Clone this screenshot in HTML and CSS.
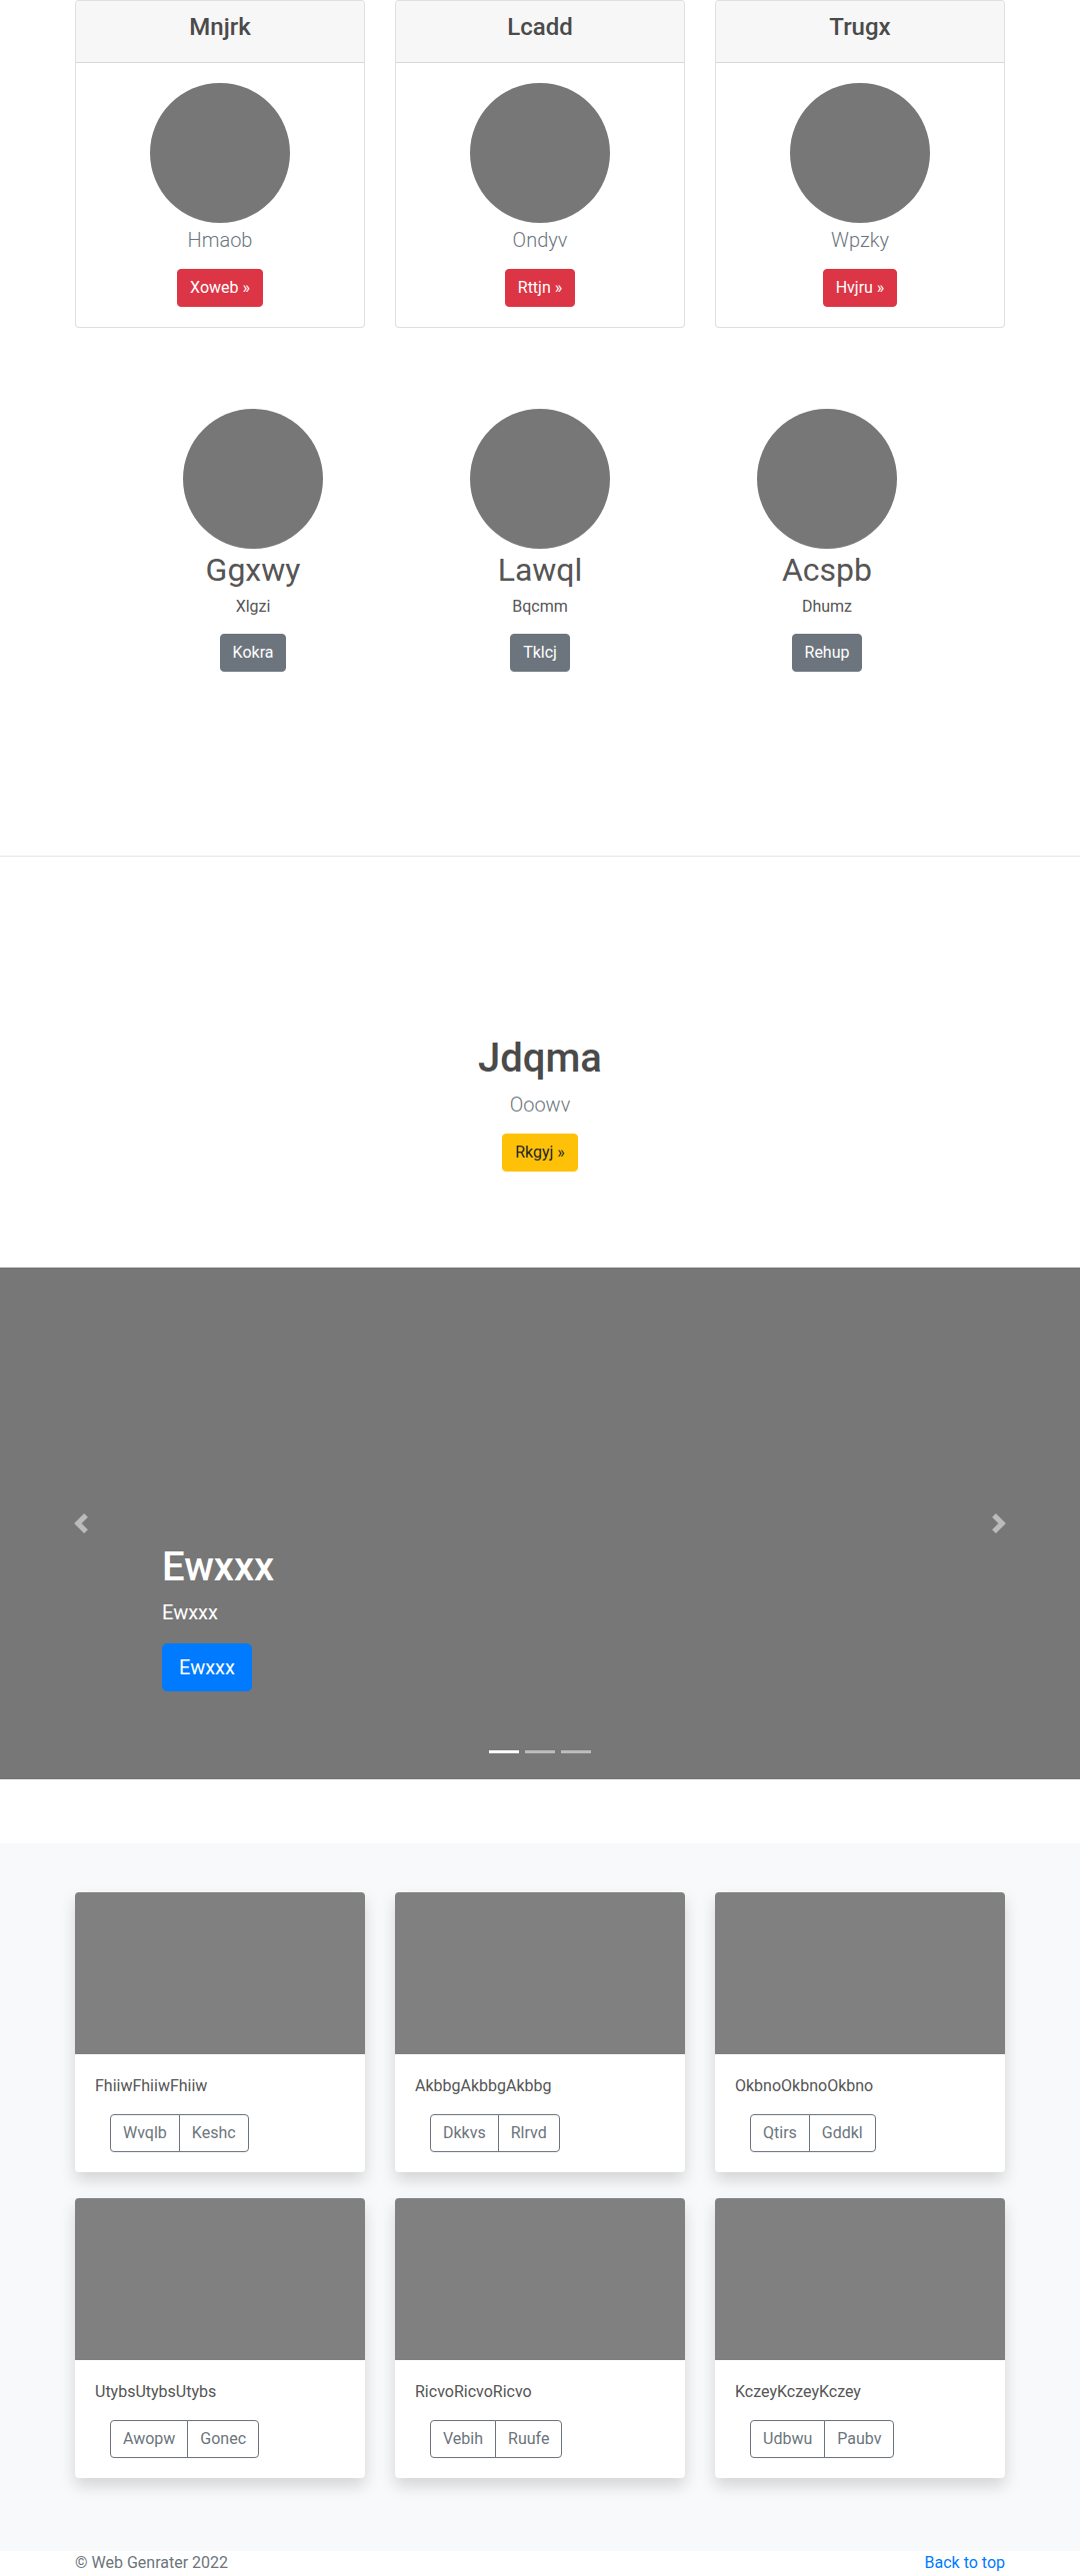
FILE: index.html
```html
<!DOCTYPE html>
<html lang="en">
<head>
<meta charset="utf-8">
<title>Web Genrater</title>
<link rel="stylesheet" href="styles.css">
</head>
<body>
<section class="pricing">
  <div class="container">
    <div class="row3">
      <div class="pcard">
        <div class="pcard-header"><h4 class="pcard-title">Mnjrk</h4></div>
        <div class="pcard-body">
          <div class="avatar"></div>
          <p class="lead">Hmaob</p>
          <a class="btn btn-danger" href="#">Xoweb »</a>
        </div>
      </div>
      <div class="pcard">
        <div class="pcard-header"><h4 class="pcard-title">Lcadd</h4></div>
        <div class="pcard-body">
          <div class="avatar"></div>
          <p class="lead">Ondyv</p>
          <a class="btn btn-danger" href="#">Rttjn »</a>
        </div>
      </div>
      <div class="pcard">
        <div class="pcard-header"><h4 class="pcard-title">Trugx</h4></div>
        <div class="pcard-body">
          <div class="avatar"></div>
          <p class="lead">Wpzky</p>
          <a class="btn btn-danger" href="#">Hvjru »</a>
        </div>
      </div>
    </div>
  </div>
</section>

<section class="marketing">
  <div class="mk-col">
    <div class="avatar"></div>
    <h2 class="mk-title">Ggxwy</h2>
    <p class="mk-text">Xlgzi</p>
    <a class="btn btn-secondary" href="#">Kokra</a>
  </div>
  <div class="mk-col">
    <div class="avatar"></div>
    <h2 class="mk-title">Lawql</h2>
    <p class="mk-text">Bqcmm</p>
    <a class="btn btn-secondary" href="#">Tklcj</a>
  </div>
  <div class="mk-col">
    <div class="avatar"></div>
    <h2 class="mk-title">Acspb</h2>
    <p class="mk-text">Dhumz</p>
    <a class="btn btn-secondary" href="#">Rehup</a>
  </div>
</section>

<hr class="divider">

<section class="hero">
  <h1 class="hero-title">Jdqma</h1>
  <p class="lead">Ooowv</p>
  <a class="btn btn-warning" href="#">Rkgyj »</a>
</section>

<section class="carousel">
  <a class="carousel-control prev" href="#">
    <svg width="20" height="20" viewBox="0 0 8 8"><path fill="#fff" d="M5.25 0l-4 4 4 4 1.5-1.5L4.25 4l2.5-2.5L5.25 0z"/></svg>
  </a>
  <div class="carousel-caption">
    <h1 class="caption-title">Ewxxx</h1>
    <p class="caption-text">Ewxxx</p>
    <p class="caption-action"><a class="btn btn-primary btn-lg" href="#">Ewxxx</a></p>
  </div>
  <a class="carousel-control next" href="#">
    <svg width="20" height="20" viewBox="0 0 8 8"><path fill="#fff" d="M2.75 0l-1.5 1.5L3.75 4l-2.5 2.5L2.75 8l4-4-4-4z"/></svg>
  </a>
  <div class="indicators">
    <span class="dot active"></span>
    <span class="dot"></span>
    <span class="dot"></span>
  </div>
</section>

<section class="album">
  <div class="container">
    <div class="row3 album-grid">
      <div class="acard">
        <div class="acard-img"></div>
        <div class="acard-body">
          <p class="acard-text">FhiiwFhiiwFhiiw</p>
          <div class="btn-group"><a class="btn btn-outline" href="#">Wvqlb</a><a class="btn btn-outline" href="#">Keshc</a></div>
        </div>
      </div>
      <div class="acard">
        <div class="acard-img"></div>
        <div class="acard-body">
          <p class="acard-text">AkbbgAkbbgAkbbg</p>
          <div class="btn-group"><a class="btn btn-outline" href="#">Dkkvs</a><a class="btn btn-outline" href="#">Rlrvd</a></div>
        </div>
      </div>
      <div class="acard">
        <div class="acard-img"></div>
        <div class="acard-body">
          <p class="acard-text">OkbnoOkbnoOkbno</p>
          <div class="btn-group"><a class="btn btn-outline" href="#">Qtirs</a><a class="btn btn-outline" href="#">Gddkl</a></div>
        </div>
      </div>
      <div class="acard">
        <div class="acard-img"></div>
        <div class="acard-body">
          <p class="acard-text">UtybsUtybsUtybs</p>
          <div class="btn-group"><a class="btn btn-outline" href="#">Awopw</a><a class="btn btn-outline" href="#">Gonec</a></div>
        </div>
      </div>
      <div class="acard">
        <div class="acard-img"></div>
        <div class="acard-body">
          <p class="acard-text">RicvoRicvoRicvo</p>
          <div class="btn-group"><a class="btn btn-outline" href="#">Vebih</a><a class="btn btn-outline" href="#">Ruufe</a></div>
        </div>
      </div>
      <div class="acard">
        <div class="acard-img"></div>
        <div class="acard-body">
          <p class="acard-text">KczeyKczeyKczey</p>
          <div class="btn-group"><a class="btn btn-outline" href="#">Udbwu</a><a class="btn btn-outline" href="#">Paubv</a></div>
        </div>
      </div>
    </div>
  </div>
</section>

<footer class="footer">
  <div class="container footer-inner">
    <p class="footer-copy">© Web Genrater 2022</p>
    <p class="footer-top"><a href="#">Back to top</a></p>
  </div>
</footer>
</body>
</html>
```

FILE: styles.css
```css
* { box-sizing: border-box; }

html, body { margin: 0; padding: 0; }

body {
  font-family: "Segoe UI", Roboto, "Liberation Sans", Arial, sans-serif;
  font-size: 16px;
  line-height: 1.5;
  color: #555;
  background: #fff;
}

.container {
  width: 960px;
  margin: 0 auto;
  padding: 0 15px;
}

.row3 {
  display: grid;
  grid-template-columns: repeat(3, 290px);
  column-gap: 30px;
}

/* buttons */
.btn {
  display: inline-block;
  padding: 6px 12px;
  font-size: 16px;
  line-height: 1.5;
  border: 1px solid transparent;
  border-radius: 4px;
  text-decoration: none;
  font-weight: 400;
  vertical-align: middle;
}
.btn-danger { background: #dc3545; border-color: #dc3545; color: #fff; }
.btn-secondary { background: #6c757d; border-color: #6c757d; color: #fff; }
.btn-warning { background: #ffc107; border-color: #ffc107; color: #212529; }
.btn-primary { background: #007bff; border-color: #007bff; color: #fff; }
.btn-lg { padding: 8px 16px; font-size: 20px; border-radius: 5px; }
.btn-outline { background: transparent; border-color: #6c757d; color: #6c757d; }

.avatar {
  width: 140px;
  height: 140px;
  border-radius: 50%;
  background: #777;
  margin: 0 auto;
}

.lead {
  font-size: 20px;
  font-weight: 300;
  line-height: 1.5;
  color: #6c757d;
}

/* pricing cards */
.pricing { margin-bottom: 81px; }

.pcard {
  border: 1px solid rgba(0,0,0,.125);
  border-radius: 4px;
  text-align: center;
  background: #fff;
}
.pcard-header {
  background: #f7f7f7;
  border-bottom: 1px solid rgba(0,0,0,.125);
  padding: 12px 20px;
  border-radius: 3px 3px 0 0;
}
.pcard-title {
  margin: 0 0 8px;
  font-size: 24px;
  line-height: 1.2;
  font-weight: 500;
  color: #4a4a4a;
}
.pcard-body { padding: 20px; }
.pcard-body .avatar { margin-bottom: 2px; }
.pcard-body .lead { margin: 0 0 14px; }

/* marketing */
.marketing {
  display: grid;
  grid-template-columns: repeat(3, 287px);
  justify-content: center;
  margin-bottom: 184px;
}
.mk-col { text-align: center; }
.mk-title {
  margin: 2px 0 6px;
  font-size: 32px;
  line-height: 1.2;
  font-weight: 400;
  color: #555;
}
.mk-text { margin: 0 0 15px; color: #555; }

.divider {
  margin: 0;
  border: 0;
  border-top: 1px solid rgba(0,0,0,.1);
  height: 0;
}

/* hero */
.hero {
  text-align: center;
  padding: 178px 0 96px;
}
.hero-title {
  margin: 0 0 7px;
  font-size: 40px;
  line-height: 1.2;
  font-weight: 500;
  color: #4a4a4a;
}
.hero .lead { margin: 0 0 14px; }

/* carousel */
.carousel {
  position: relative;
  height: 512px;
  background: #777;
  margin-bottom: 64px;
}
.carousel-control {
  position: absolute;
  top: 0;
  bottom: 0;
  width: 15%;
  display: flex;
  align-items: center;
  justify-content: center;
  opacity: .5;
}
.carousel-control.prev { left: 0; }
.carousel-control.next { right: 0; }
.carousel-caption {
  position: absolute;
  left: 15%;
  right: 15%;
  bottom: 52px;
  padding: 20px 0;
  color: #fff;
  text-align: left;
}
.caption-title {
  margin: 0 0 6px;
  font-size: 40px;
  line-height: 1.2;
  font-weight: 500;
}
.caption-text {
  margin: 0 0 16px;
  font-size: 20px;
  line-height: 1.5;
}
.caption-action {
  margin: 0 0 16px;
  line-height: 0;
}
.indicators {
  position: absolute;
  left: 0;
  right: 0;
  bottom: 26px;
  display: flex;
  justify-content: center;
  gap: 6px;
}
.dot {
  width: 30px;
  height: 3px;
  background: #fff;
  opacity: .5;
}
.dot.active { opacity: 1; }

/* album */
.album {
  background: #f8f9fa;
  padding: 49px 0 47px;
}
.album-grid { row-gap: 0; }
.acard {
  background: #fff;
  border-radius: 4px;
  overflow: hidden;
  box-shadow: 0 8px 16px rgba(0,0,0,.15);
  margin-bottom: 26px;
}
.acard-img {
  height: 162px;
  background: #808080;
}
.acard-body { padding: 20px; }
.acard-text { margin: 0 0 16px; color: #555; }
.btn-group {
  display: inline-flex;
  margin-left: 15px;
}
.btn-group .btn:first-child { border-radius: 4px 0 0 4px; }
.btn-group .btn + .btn { margin-left: -1px; border-radius: 0 4px 4px 0; }

/* footer */
.footer { color: #6c757d; }
.footer-inner {
  display: flex;
  justify-content: space-between;
}
.footer p { margin: 0; }
.footer a { color: #007bff; text-decoration: none; }
```
